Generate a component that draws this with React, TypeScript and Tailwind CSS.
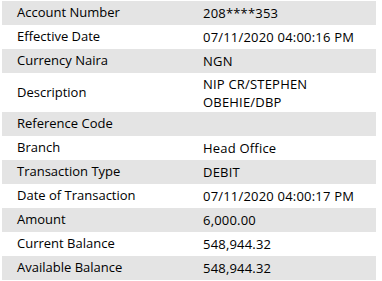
const rows: { label: string; value: React.ReactNode; tall?: boolean }[] = [
  { label: 'Account Number', value: '208****353' },
  { label: 'Effective Date', value: '07/11/2020 04:00:16 PM' },
  { label: 'Currency Naira', value: 'NGN' },
  {
    label: 'Description',
    value: (
      <>
        NIP CR/STEPHEN
        <br />
        OBEHIE/DBP
      </>
    ),
    tall: true,
  },
  { label: 'Reference Code', value: '' },
  { label: 'Branch', value: 'Head Office' },
  { label: 'Transaction Type', value: 'DEBIT' },
  { label: 'Date of Transaction', value: '07/11/2020 04:00:17 PM' },
  { label: 'Amount', value: '6,000.00' },
  { label: 'Current Balance', value: '548,944.32' },
  { label: 'Available Balance', value: '548,944.32' },
];

function App() {
  return (
    <div className="w-[382px] h-[281px] bg-white pt-px font-['Open_Sans',sans-serif] text-[13px] text-black">
      <div className="ml-[2px] w-[374px] flex flex-col">
        {rows.map((row, i) => (
          <div
            key={row.label}
            className={`flex items-center ${row.tall ? 'h-[39px]' : 'h-[24px]'} ${i % 2 === 0 ? 'bg-[#e4e4e4]' : 'bg-white'}`}
          >
            <div className="w-[186px] pl-[15px] whitespace-nowrap">{row.label}</div>
            <div className="flex-1 pl-[15px] leading-[18px] whitespace-nowrap tracking-[0.2px]">{row.value}</div>
          </div>
        ))}
      </div>
    </div>
  );
}

export default App;
